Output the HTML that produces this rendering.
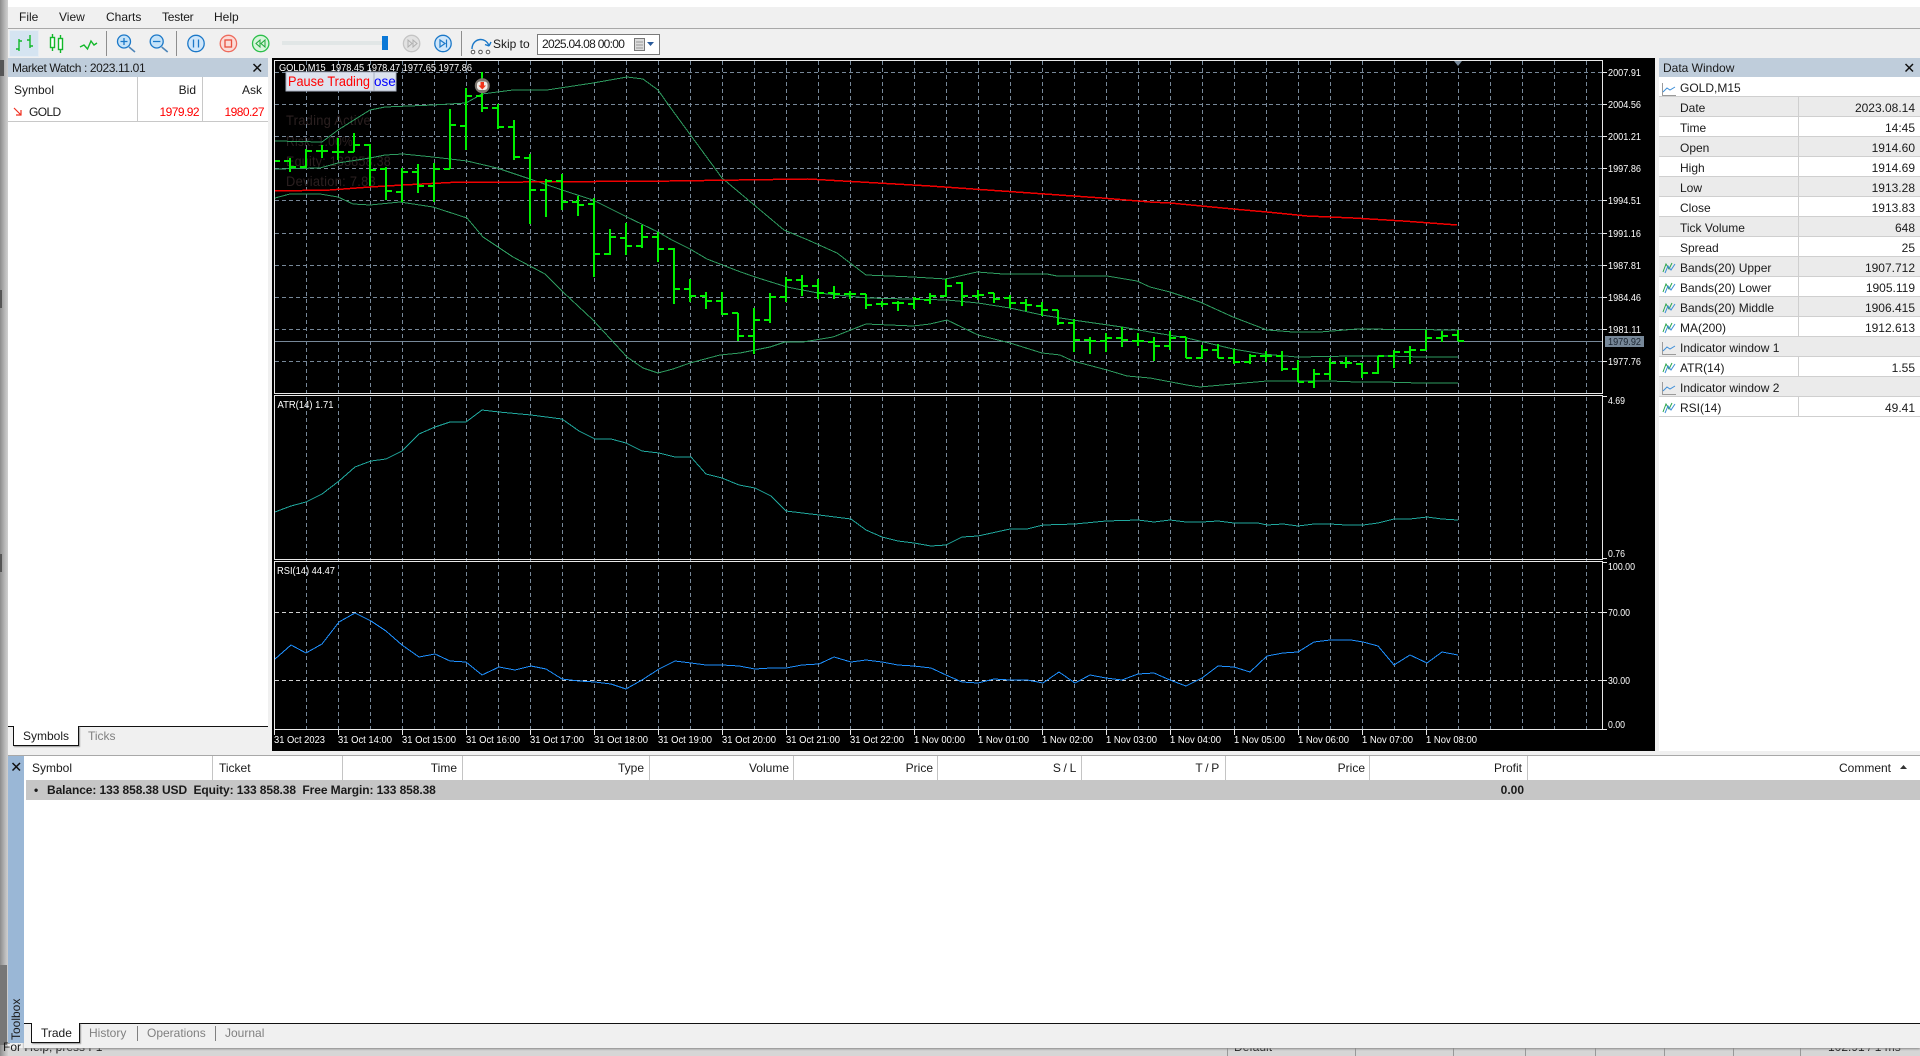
<!DOCTYPE html>
<html><head><meta charset="utf-8"><title>Strategy Tester</title>
<style>
html,body{margin:0;padding:0;background:#f0f0f0;width:1920px;height:1056px;overflow:hidden}
body{position:relative;font-family:"Liberation Sans",sans-serif;font-size:12px;color:#1a1a1a}
.b{position:absolute}
.t{position:absolute;white-space:nowrap;line-height:14px;height:14px}
.g{color:#808080}.red{color:#f00}.bd{font-weight:bold}
svg text{font-family:"Liberation Sans",sans-serif}
.w text{fill:#fff;font-size:10px}
</style></head><body>
<!-- left strip -->
<div class="b" style="left:0;top:0;width:8px;height:1056px;background:linear-gradient(90deg,#8c8c8c,#b8b8b8 60%,#d0d0d0)"></div>
<div class="b" style="left:0;top:60px;width:4px;height:16px;background:#555"></div>
<div class="b" style="left:0;top:290px;width:2px;height:18px;background:#555"></div>
<div class="b" style="left:0;top:554px;width:2px;height:18px;background:#555"></div>
<div class="b" style="left:0;top:965px;width:7px;height:80px;background:#777"></div>
<!-- top white -->
<div class="b" style="left:8px;top:0;width:1912px;height:7px;background:#fff"></div>
<div class="b" style="left:8px;top:28px;width:1912px;height:1px;background:#a8a8a8"></div>
<div class="t" style="left:19px;top:10px">File</div>
<div class="t" style="left:59px;top:10px">View</div>
<div class="t" style="left:106px;top:10px">Charts</div>
<div class="t" style="left:162px;top:10px;letter-spacing:-.2px">Tester</div>
<div class="t" style="left:214px;top:10px">Help</div>
<!-- toolbar -->
<div class="b" style="left:9px;top:30px;width:28px;height:25px;background:#d5e4f1;border:1px solid #e6edf4"></div>
<svg class="b" style="left:0;top:0" width="700" height="60" viewBox="0 0 700 60">
<g fill="none" stroke="#12b82a" stroke-width="1.4">
<path d="M19 39V51M16 49H19M19 41H22M30 35V48M27 40H30M30 46H33"/>
<path d="M52.5 34V51M60.5 35V53" />
<rect x="50.5" y="37.5" width="4" height="10" fill="#fff"/><rect x="58.5" y="38.5" width="4" height="11" fill="#fff"/>
<path d="M80 47L84 45L87.5 49L91 41L94 45L97 43"/>
</g>
<path d="M106.500 31V56M176.500 31V56M461.500 31V56" stroke="#8e8e8e"/>
<g fill="#c6e3f8" stroke="#1b78c8" stroke-width="1.3">
<circle cx="124" cy="41.500" r="6.500"/><circle cx="156.700" cy="41.500" r="6.500"/>
<circle cx="196" cy="43.500" r="8.200" fill="#cfe6fa"/><circle cx="443" cy="43.500" r="8.200" fill="#cfe6fa"/>
</g>
<path d="M129 47L135 52M161.700 47L167.700 52" stroke="#4f86b8" stroke-width="1.600"/>
<path d="M120.500 41.500H127.500M124 38V45M153 41.500H160.400M193.500 39.500V47.500M198.500 39.500V47.500" stroke="#1b78c8" stroke-width="1.300" fill="none"/>
<circle cx="228.400" cy="43.500" r="8.200" fill="#fbdcd8" stroke="#ee6b5d" stroke-width="1.300"/>
<rect x="225" y="40" width="6.500" height="7" fill="none" stroke="#e8503f" stroke-width="1.300"/>
<circle cx="260.700" cy="43.500" r="8.200" fill="#d8f5dc" stroke="#2cbf4a" stroke-width="1.300"/>
<path d="M260 40L256 43.500L260 47ZM265 40L261 43.500L265 47Z" fill="none" stroke="#1ea83a"/>
<rect x="282" y="41" width="104" height="4" fill="#e1e6e6"/>
<rect x="382" y="36" width="6" height="14" fill="#0a78d7"/>
<circle cx="411.600" cy="43.500" r="8.200" fill="#e2e2e2" stroke="#c4c4c4" stroke-width="1.300"/>
<path d="M408 40L412 43.500L408 47ZM413 40L417 43.500L413 47Z" fill="none" stroke="#b0b0b0"/>
<path d="M440 40L445 43.500L440 47ZM446.500 39.500V47.500" fill="none" stroke="#1b78c8" stroke-width="1.200"/>
<path d="M472 49C472 38 486 36 489 46M489 46L491 42M489 46L485 44.500" fill="none" stroke="#1b78c8" stroke-width="1.400"/>
<circle cx="473" cy="52" r="1.800" fill="#fff" stroke="#555"/><circle cx="480.500" cy="52" r="1.800" fill="#fff" stroke="#555"/><circle cx="488" cy="52" r="1.800" fill="#fff" stroke="#555"/>
<rect x="537.500" y="34.500" width="122" height="20" fill="#fff" stroke="#7a7a7a"/>
<rect x="634.500" y="38.500" width="10" height="12" fill="#dcdcdc" stroke="#777"/>
<path d="M636 42H643M636 45H643M636 48H643" stroke="#999"/>
<path d="M647 42H654L650.500 46Z" fill="#2a5a9a"/>
</svg>
<div class="t" style="left:493px;top:37px">Skip to</div>
<div class="t" style="left:542px;top:37px;letter-spacing:-.7px">2025.04.08 00:00</div>

<!-- market watch -->
<div class="b" style="left:8px;top:58px;width:260px;height:668px;background:#fff"></div>
<div class="b" style="left:8px;top:58px;width:260px;height:19px;background:#bfcddb"></div>
<div class="t" style="left:12px;top:61px;letter-spacing:-.38px">Market Watch : 2023.11.01</div>
<svg class="b" style="left:252px;top:63px" width="11" height="10"><path d="M1.500 1L9 8.500M9 1L1.500 8.500" stroke="#111" stroke-width="1.500"/></svg>
<div class="b" style="left:137px;top:77px;width:1px;height:44px;background:#c8c8c8"></div>
<div class="b" style="left:202px;top:77px;width:1px;height:44px;background:#c8c8c8"></div>
<div class="b" style="left:8px;top:121px;width:260px;height:1px;background:#c8c8c8"></div>
<div class="t" style="left:14px;top:83px">Symbol</div>
<div class="t" style="right:1724px;top:83px">Bid</div>
<div class="t" style="right:1658px;top:83px">Ask</div>
<svg class="b" style="left:13px;top:107px" width="10" height="10"><path d="M1 1L8 8M8 3V8H3" fill="none" stroke="#f03020" stroke-width="1.200"/></svg>
<div class="t" style="left:29px;top:105px;letter-spacing:-.6px">GOLD</div>
<div class="t red" style="right:1721px;top:105px;letter-spacing:-.55px">1979.92</div>
<div class="t red" style="right:1656px;top:105px;letter-spacing:-.55px">1980.27</div>
<!-- market tabs -->
<div class="b" style="left:8px;top:726px;width:260px;height:1px;background:#111"></div>
<div class="b" style="left:13px;top:726px;width:64px;height:19px;background:#fff;border:1px solid #111;border-top:none;box-shadow:1px 1px 1px #999"></div>
<div class="t" style="left:23px;top:729px">Symbols</div>
<div class="t g" style="left:88px;top:729px">Ticks</div>
<div class="b" style="left:8px;top:755px;width:1912px;height:1px;background:#a8a8a8"></div>

<!-- chart -->
<svg class="b" style="left:0;top:0" width="1920" height="1056" viewBox="0 0 1920 1056">
<rect x="272" y="58" width="1383" height="693" fill="#000"/>
<g font-size="14" fill="#2b2020" style="letter-spacing:.3px">
<text x="286" y="125" textLength="85" lengthAdjust="spacingAndGlyphs">Trading Active</text>
<text x="286" y="146" textLength="67" lengthAdjust="spacingAndGlyphs">Risk: 1.00%</text>
<text x="286" y="166" textLength="105" lengthAdjust="spacingAndGlyphs">Equity: 133858.38</text>
<text x="286" y="186" textLength="90" lengthAdjust="spacingAndGlyphs">Deviation: 7.83</text>
</g>
<path stroke="#778899" stroke-dasharray="4 3" fill="none" shape-rendering="crispEdges" d="M306.500 61V730M338.500 61V730M370.500 61V730M402.500 61V730M434.500 61V730M466.500 61V730M498.500 61V730M530.500 61V730M562.500 61V730M594.500 61V730M626.500 61V730M658.500 61V730M690.500 61V730M722.500 61V730M754.500 61V730M786.500 61V730M818.500 61V730M850.500 61V730M882.500 61V730M914.500 61V730M946.500 61V730M978.500 61V730M1010.500 61V730M1042.500 61V730M1074.500 61V730M1106.500 61V730M1138.500 61V730M1170.500 61V730M1202.500 61V730M1234.500 61V730M1266.500 61V730M1298.500 61V730M1330.500 61V730M1362.500 61V730M1394.500 61V730M1426.500 61V730M1458.500 61V730M1490.500 61V730M1522.500 61V730M1554.500 61V730M1586.500 61V730"/>
<path stroke="#778899" stroke-dasharray="4 3" fill="none" shape-rendering="crispEdges" d="M275 72.500H1602M275 104.500H1602M275 136.500H1602M275 168.500H1602M275 200.500H1602M275 233.500H1602M275 265.500H1602M275 297.500H1602M275 329.500H1602M275 361.500H1602"/>
<path stroke="#778899" fill="none" shape-rendering="crispEdges" d="M275 341.500H1602"/>
<path stroke="#d0d0d0" stroke-dasharray="4 3" fill="none" shape-rendering="crispEdges" d="M275 612.500H1602M275 680.500H1602"/>
<!-- bands -->
<g fill="none" stroke="#2e9b5f" stroke-width="1" shape-rendering="crispEdges">
<path d="M275 141L322 142L338 130L370 110L385 107L433 105L466 103L482 94L513 90L547 90L593 83L627 77L643 79L658 90L670 107L722 178L784 230L808 240L837 253L866 275L913 277L946 279L977 272L1003 274L1047 274L1057 276L1107 276L1137 281L1150 287L1170 292L1200 302L1233 317L1267 330L1293 332L1320 332L1357 329L1458 330"/>
<path d="M275 169L320 168L338 163L370 158L385 155L403 154L433 157L467 161L497 168L530 179L562 190L593 200L627 217L658 232L672 240L690 249L707 259L738 271L755 277L787 287L818 293L867 298L947 300L978 303L1010 308L1042 315L1073 320L1122 327L1150 332L1187 338L1233 349L1263 354L1297 357L1353 356L1390 356L1420 357L1458 357"/>
<path d="M275 198L290 194L320 194L338 197L353 204L370 205L400 202L433 207L467 218L483 237L513 257L545 274L563 292L593 320L627 357L643 368L658 373L673 369L690 363L720 355L740 353L770 347L785 342L803 342L833 337L866 324L913 326L930 324L947 320L978 335L1010 343L1042 353L1060 355L1073 361L1107 370L1127 376L1150 378L1187 385L1200 387L1233 384L1267 381L1330 381L1357 382L1383 382L1420 383L1458 383"/>
</g>
<path fill="none" stroke="#f00000" stroke-width="1.500" shape-rendering="crispEdges" d="M275 191L330 190L370 187L403 185L460 182L523 182L670 181L808 179L930 186L1102 198L1150 202L1170 203L1233 209L1267 212L1307 216L1353 218L1403 221L1457 225"/>
<!-- bars -->
<path fill="none" stroke="#00f000" stroke-width="2" shape-rendering="crispEdges" d="M275 161H280
M290 158V172M284 161H290M290 167H296
M306 149V168M300 167H306M306 151H312
M322 145V158M316 151H322M322 151H328
M338 138V160M332 152H338M338 152H344
M354 133V152M348 152H354M354 145H360
M370 144V186M364 145H370M370 170H376
M386 167V200M380 169H386M386 191H392
M402 168V202M396 192H402M402 172H408
M418 164V193M412 172H418M418 186H424
M434 163V202M428 186H434M434 169H440
M450 109V169M444 169H450M450 125H456
M466 88V150M460 126H466M466 96H472
M482 72V112M476 96H482M482 108H488
M498 104V129M492 108H498M498 127H504
M514 120V160M508 127H514M514 157H520
M530 154V224M524 158H530M530 190H536
M546 179V217M540 190H546M546 181H552
M562 174V210M556 181H562M562 202H568
M578 196V216M572 202H578M578 205H584
M594 198V277M588 204H594M594 254H600
M610 229V255M604 254H610M610 237H616
M626 223V255M620 238H626M626 246H632
M642 225V248M636 246H642M642 237H648
M658 232V262M652 237H658M658 249H664
M674 248V304M668 249H674M674 289H680
M690 279V302M684 289H690M690 296H696
M706 292V309M700 296H706M706 301H712
M722 292V315M716 301H722M722 314H728
M738 313V341M732 313H738M738 336H744
M754 308V354M748 336H754M754 320H760
M770 293V323M764 320H770M770 297H776
M786 277V302M780 297H786M786 280H792
M802 275V296M796 280H802M802 286H808
M818 279V299M812 286H818M818 293H824
M834 286V299M828 293H834M834 294H840
M850 291V299M844 294H850M850 294H856
M866 294V309M860 294H866M866 305H872
M882 301V307M876 304H882M882 304H888
M898 301V311M892 303H898M898 303H904
M914 297V309M908 304H914M914 299H920
M930 293V304M924 300H930M930 296H936
M946 279V297M940 296H946M946 286H952
M962 282V306M956 283H962M962 296H968
M978 290V300M972 296H978M978 295H984
M994 293V303M988 293H994M994 299H1000
M1010 295V308M1004 298H1010M1010 303H1016
M1026 299V311M1020 303H1026M1026 305H1032
M1042 302V316M1036 306H1042M1042 310H1048
M1058 310V325M1052 310H1058M1058 323H1064
M1074 319V352M1068 323H1074M1074 340H1080
M1090 337V354M1084 340H1090M1090 341H1096
M1106 333V352M1100 341H1106M1106 338H1112
M1122 327V347M1116 338H1122M1122 340H1128
M1138 333V346M1132 341H1138M1138 341H1144
M1154 337V361M1148 342H1154M1154 346H1160
M1170 331V350M1164 346H1170M1170 338H1176
M1186 337V358M1180 337H1186M1186 358H1192
M1202 345V358M1196 358H1202M1202 350H1208
M1218 344V358M1212 350H1218M1218 358H1224
M1234 349V364M1228 358H1234M1234 362H1240
M1250 354V364M1244 362H1250M1250 356H1256
M1266 351V362M1260 356H1266M1266 356H1272
M1282 351V371M1276 356H1282M1282 369H1288
M1298 360V382M1292 369H1298M1298 382H1304
M1314 369V388M1308 382H1314M1314 374H1320
M1330 358V380M1324 374H1330M1330 363H1336
M1346 357V368M1340 363H1346M1346 363H1352
M1362 363V378M1356 364H1362M1362 373H1368
M1378 356V374M1372 373H1378M1378 356H1384
M1394 350V368M1388 356H1394M1394 352H1400
M1410 346V364M1404 352H1410M1410 350H1416
M1426 330V350M1420 350H1426M1426 338H1432
M1442 331V342M1436 338H1442M1442 336H1448
M1458 330V341M1452 335H1458M1458 341H1464"/>
<!-- ATR -->
<path fill="none" stroke="#20a89e" stroke-width="1" shape-rendering="crispEdges" d="M275 512L291 506L306 502L322 494L339 481L355 467L371 461L386 459L402 451L419 434L435 427L450 422L466 422L482 410L499 412L531 415L562 419L579 431L595 439L611 439L626 443L642 451L659 453L675 457L691 457L706 474L722 478L739 485L755 488L771 496L786 511L819 515L851 519L866 530L882 537L898 541L914 543L931 546L946 545L962 537L978 536L1010 529L1027 529L1043 525L1075 524L1106 521L1138 520L1154 522L1170 520L1186 522L1202 522L1218 521L1234 523L1258 523L1267 525L1283 524L1298 526L1314 524L1330 524L1346 525L1363 525L1378 523L1394 519L1410 519L1427 517L1442 519L1458 520"/>
<!-- RSI -->
<path fill="none" stroke="#1e90ff" stroke-width="1" shape-rendering="crispEdges" d="M275 659L291 645L306 653L322 644L339 622L355 613L371 621L386 631L402 645L419 657L435 654L450 661L466 662L482 675L499 667L515 670L531 666L546 669L562 679L579 681L595 682L611 684L626 689L642 680L659 669L675 661L691 663L706 665L722 665L739 666L755 669L771 668L786 668L802 665L819 664L834 657L851 662L866 660L882 662L898 665L914 666L931 668L946 675L962 682L978 683L994 679L1010 680L1027 680L1043 683L1059 672L1075 683L1090 675L1106 678L1122 680L1138 674L1154 673L1170 680L1186 686L1202 678L1218 666L1234 667L1250 672L1267 656L1283 653L1298 652L1314 642L1330 640L1351 640L1363 642L1378 646L1394 665L1410 655L1427 663L1442 652L1458 655"/>
<!-- frames -->
<g fill="none" stroke="#e8e8e8" shape-rendering="crispEdges">
<rect x="274.500" y="60.500" width="1328" height="333"/>
<rect x="274.500" y="395.500" width="1328" height="164"/>
<rect x="274.500" y="561.500" width="1328" height="168"/>
<path d="M1603 72.500H1607M1603 104.500H1607M1603 136.500H1607M1603 168.500H1607M1603 200.500H1607M1603 233.500H1607M1603 265.500H1607M1603 297.500H1607M1603 329.500H1607M1603 361.500H1607M1603 396.500H1607M1603 558.500H1607M1603 562.500H1607M1603 612.500H1607M1603 680.500H1607M1603 729.500H1607"/>
<path d="M274.500 730V735M338.500 730V735M402.500 730V735M466.500 730V735M530.500 730V735M594.500 730V735M658.500 730V735M722.500 730V735M786.500 730V735M850.500 730V735M914.500 730V735M978.500 730V735M1042.500 730V735M1106.500 730V735M1170.500 730V735M1234.500 730V735M1298.500 730V735M1362.500 730V735M1426.500 730V735"/>
</g>
<path d="M1454 61H1462L1458 66Z" fill="#778899"/>
<rect x="1605" y="336" width="39" height="11" fill="#778899"/>
<text x="1608" y="345" font-size="10" fill="#1a2430" textLength="33" lengthAdjust="spacingAndGlyphs">1979.92</text>
<g class="w">
<text x="279" y="71" textLength="193" lengthAdjust="spacingAndGlyphs" style="white-space:pre">GOLD,M15  1978.45 1978.47 1977.65 1977.86</text>
<text x="277.500" y="408" textLength="56" lengthAdjust="spacingAndGlyphs">ATR(14) 1.71</text>
<text x="277" y="574" textLength="58" lengthAdjust="spacingAndGlyphs">RSI(14) 44.47</text>
<text x="1608" y="76" textLength="33" lengthAdjust="spacingAndGlyphs">2007.91</text>
<text x="1608" y="108" textLength="33" lengthAdjust="spacingAndGlyphs">2004.56</text>
<text x="1608" y="140" textLength="33" lengthAdjust="spacingAndGlyphs">2001.21</text>
<text x="1608" y="172" textLength="33" lengthAdjust="spacingAndGlyphs">1997.86</text>
<text x="1608" y="204" textLength="33" lengthAdjust="spacingAndGlyphs">1994.51</text>
<text x="1608" y="237" textLength="33" lengthAdjust="spacingAndGlyphs">1991.16</text>
<text x="1608" y="269" textLength="33" lengthAdjust="spacingAndGlyphs">1987.81</text>
<text x="1608" y="301" textLength="33" lengthAdjust="spacingAndGlyphs">1984.46</text>
<text x="1608" y="333" textLength="33" lengthAdjust="spacingAndGlyphs">1981.11</text>
<text x="1608" y="365" textLength="33" lengthAdjust="spacingAndGlyphs">1977.76</text>
<text x="1608" y="404" textLength="17" lengthAdjust="spacingAndGlyphs">4.69</text>
<text x="1608" y="557" textLength="17" lengthAdjust="spacingAndGlyphs">0.76</text>
<text x="1608" y="570" textLength="27" lengthAdjust="spacingAndGlyphs">100.00</text>
<text x="1608" y="616" textLength="22" lengthAdjust="spacingAndGlyphs">70.00</text>
<text x="1608" y="684" textLength="22" lengthAdjust="spacingAndGlyphs">30.00</text>
<text x="1608" y="728" textLength="17" lengthAdjust="spacingAndGlyphs">0.00</text>
<text x="274" y="743" textLength="51" lengthAdjust="spacingAndGlyphs">31 Oct 2023</text>
<text x="338" y="743" textLength="54" lengthAdjust="spacingAndGlyphs">31 Oct 14:00</text>
<text x="402" y="743" textLength="54" lengthAdjust="spacingAndGlyphs">31 Oct 15:00</text>
<text x="466" y="743" textLength="54" lengthAdjust="spacingAndGlyphs">31 Oct 16:00</text>
<text x="530" y="743" textLength="54" lengthAdjust="spacingAndGlyphs">31 Oct 17:00</text>
<text x="594" y="743" textLength="54" lengthAdjust="spacingAndGlyphs">31 Oct 18:00</text>
<text x="658" y="743" textLength="54" lengthAdjust="spacingAndGlyphs">31 Oct 19:00</text>
<text x="722" y="743" textLength="54" lengthAdjust="spacingAndGlyphs">31 Oct 20:00</text>
<text x="786" y="743" textLength="54" lengthAdjust="spacingAndGlyphs">31 Oct 21:00</text>
<text x="850" y="743" textLength="54" lengthAdjust="spacingAndGlyphs">31 Oct 22:00</text>
<text x="914" y="743" textLength="51" lengthAdjust="spacingAndGlyphs">1 Nov 00:00</text>
<text x="978" y="743" textLength="51" lengthAdjust="spacingAndGlyphs">1 Nov 01:00</text>
<text x="1042" y="743" textLength="51" lengthAdjust="spacingAndGlyphs">1 Nov 02:00</text>
<text x="1106" y="743" textLength="51" lengthAdjust="spacingAndGlyphs">1 Nov 03:00</text>
<text x="1170" y="743" textLength="51" lengthAdjust="spacingAndGlyphs">1 Nov 04:00</text>
<text x="1234" y="743" textLength="51" lengthAdjust="spacingAndGlyphs">1 Nov 05:00</text>
<text x="1298" y="743" textLength="51" lengthAdjust="spacingAndGlyphs">1 Nov 06:00</text>
<text x="1362" y="743" textLength="51" lengthAdjust="spacingAndGlyphs">1 Nov 07:00</text>
<text x="1426" y="743" textLength="51" lengthAdjust="spacingAndGlyphs">1 Nov 08:00</text>
</g>
<!-- marker -->
<circle cx="482.300" cy="85.700" r="7.500" fill="#7f7870"/>
<rect x="477" y="81.500" width="10.500" height="8.500" rx="3" fill="#f2ece8"/>
<path d="M480.500 82H484V85.500H486L482.300 89.500L478.500 85.500H480.500Z" fill="#f0341a"/>
<!-- buttons -->
<rect x="286" y="72" width="110" height="19" fill="#dbe2ee" stroke="#aab2c2"/>
<text x="374" y="86" font-size="13.500" fill="#0000ff">ose</text>
<rect x="286" y="72" width="88" height="19" fill="#dde3ee" stroke="#aab2c2"/>
<text x="288" y="86" font-size="13.500" fill="#f00" textLength="82" lengthAdjust="spacingAndGlyphs">Pause Trading</text>
</svg>

<!-- data window -->
<div class="b" style="left:1659px;top:58px;width:261px;height:693px;background:#fff"></div>
<div class="b" style="left:1659px;top:58px;width:261px;height:19px;background:#bfcddb"></div>
<div class="t" style="left:1663px;top:61px">Data Window</div>
<svg class="b" style="left:1904px;top:63px" width="11" height="10"><path d="M1.500 1L9 8.500M9 1L1.500 8.500" stroke="#111" stroke-width="1.500"/></svg>
<div class="b" style="left:1659px;top:97px;width:261px;height:320px;background:repeating-linear-gradient(180deg,#ebebeb 0,#ebebeb 19px,#cfcfcf 19px,#cfcfcf 20px,#fff 20px,#fff 39px,#cfcfcf 39px,#cfcfcf 40px)"></div>
<div class="b" style="left:1659px;top:96px;width:261px;height:1px;background:#cfcfcf"></div>
<div class="b" style="left:1798px;top:97px;width:1px;height:240px;background:#cfcfcf"></div>
<div class="b" style="left:1798px;top:357px;width:1px;height:20px;background:#cfcfcf"></div>
<div class="b" style="left:1798px;top:397px;width:1px;height:20px;background:#cfcfcf"></div>
<div class="t" style="left:1680px;top:81px">GOLD,M15</div>
<div class="t" style="left:1680px;top:101px">Date</div><div class="t" style="right:5px;top:101px">2023.08.14</div>
<div class="t" style="left:1680px;top:121px">Time</div><div class="t" style="right:5px;top:121px">14:45</div>
<div class="t" style="left:1680px;top:141px">Open</div><div class="t" style="right:5px;top:141px">1914.60</div>
<div class="t" style="left:1680px;top:161px">High</div><div class="t" style="right:5px;top:161px">1914.69</div>
<div class="t" style="left:1680px;top:181px">Low</div><div class="t" style="right:5px;top:181px">1913.28</div>
<div class="t" style="left:1680px;top:201px">Close</div><div class="t" style="right:5px;top:201px">1913.83</div>
<div class="t" style="left:1680px;top:221px">Tick Volume</div><div class="t" style="right:5px;top:221px">648</div>
<div class="t" style="left:1680px;top:241px">Spread</div><div class="t" style="right:5px;top:241px">25</div>
<div class="t" style="left:1680px;top:261px">Bands(20) Upper</div><div class="t" style="right:5px;top:261px">1907.712</div>
<div class="t" style="left:1680px;top:281px">Bands(20) Lower</div><div class="t" style="right:5px;top:281px">1905.119</div>
<div class="t" style="left:1680px;top:301px">Bands(20) Middle</div><div class="t" style="right:5px;top:301px">1906.415</div>
<div class="t" style="left:1680px;top:321px">MA(200)</div><div class="t" style="right:5px;top:321px">1912.613</div>
<div class="t" style="left:1680px;top:341px">Indicator window 1</div>
<div class="t" style="left:1680px;top:361px">ATR(14)</div><div class="t" style="right:5px;top:361px">1.55</div>
<div class="t" style="left:1680px;top:381px">Indicator window 2</div>
<div class="t" style="left:1680px;top:401px">RSI(14)</div><div class="t" style="right:5px;top:401px">49.41</div>
<svg class="b" style="left:1659px;top:77px" width="20" height="340" viewBox="0 0 20 340" fill="none">
<g transform="translate(0,2)"><path d="M3.500 4V16.500H17" stroke="#9a9a9a"/><path d="M4 13L8 9L11 11L16 8" stroke="#3c8ed8"/></g>
<g transform="translate(0,261)"><path d="M3.500 4V16.500H17" stroke="#9a9a9a"/><path d="M4 13L8 9L11 11L16 8" stroke="#3c8ed8"/></g>
<g transform="translate(0,301)"><path d="M3.500 4V16.500H17" stroke="#9a9a9a"/><path d="M4 13L8 9L11 11L16 8" stroke="#3c8ed8"/></g>
<g stroke-width="1">
<g transform="translate(0,180)"><path d="M4 15L7 7L10 12L13 6" stroke="#2aa44a"/><path d="M6 16L9 9L12 13L16 7" stroke="#3c8ed8"/></g>
<g transform="translate(0,200)"><path d="M4 15L7 7L10 12L13 6" stroke="#2aa44a"/><path d="M6 16L9 9L12 13L16 7" stroke="#3c8ed8"/></g>
<g transform="translate(0,220)"><path d="M4 15L7 7L10 12L13 6" stroke="#2aa44a"/><path d="M6 16L9 9L12 13L16 7" stroke="#3c8ed8"/></g>
<g transform="translate(0,240)"><path d="M4 15L7 7L10 12L13 6" stroke="#2aa44a"/><path d="M6 16L9 9L12 13L16 7" stroke="#3c8ed8"/></g>
<g transform="translate(0,280)"><path d="M4 15L7 7L10 12L13 6" stroke="#2aa44a"/><path d="M6 16L9 9L12 13L16 7" stroke="#3c8ed8"/></g>
<g transform="translate(0,320)"><path d="M4 15L7 7L10 12L13 6" stroke="#2aa44a"/><path d="M6 16L9 9L12 13L16 7" stroke="#3c8ed8"/></g>
</g>
</svg>

<!-- status (mostly hidden) -->
<div class="b" style="left:8px;top:1048px;width:1912px;height:8px;background:#d6d6d6"></div>
<div class="t" style="left:3px;top:1040px">For Help, press F1</div>
<div class="t" style="left:1234px;top:1040px">Default</div>
<div class="t" style="left:1828px;top:1040px">102.91 / 1 ms</div>
<div class="b" style="left:1227px;top:1048px;width:1px;height:8px;background:#999"></div>
<div class="b" style="left:1355px;top:1048px;width:1px;height:8px;background:#999"></div>
<div class="b" style="left:1453px;top:1048px;width:1px;height:8px;background:#999"></div>
<div class="b" style="left:1525px;top:1048px;width:1px;height:8px;background:#999"></div>
<div class="b" style="left:1595px;top:1048px;width:1px;height:8px;background:#999"></div>
<div class="b" style="left:1664px;top:1048px;width:1px;height:8px;background:#999"></div>
<div class="b" style="left:1733px;top:1048px;width:1px;height:8px;background:#999"></div>
<div class="b" style="left:1800px;top:1048px;width:1px;height:8px;background:#999"></div>

<!-- toolbox -->
<div class="b" style="left:24px;top:1023px;width:1896px;height:25px;background:#f0f0f0;box-shadow:0 1px 2px #888"></div>
<div class="b" style="left:8px;top:756px;width:16px;height:287px;background:#9ab7d6"></div>
<div class="b" style="left:24px;top:756px;width:1896px;height:267px;background:#fff"></div>
<div class="b" style="left:26px;top:780px;width:1894px;height:20px;background:#c6c6c6"></div>
<svg class="b" style="left:11px;top:762px" width="11" height="10"><path d="M1.500 1L9 8.500M9 1L1.500 8.500" stroke="#111" stroke-width="1.500"/></svg>
<div class="b" style="left:212px;top:756px;width:1px;height:24px;background:#c4c4c4"></div>
<div class="b" style="left:342px;top:756px;width:1px;height:24px;background:#c4c4c4"></div>
<div class="b" style="left:462px;top:756px;width:1px;height:24px;background:#c4c4c4"></div>
<div class="b" style="left:649px;top:756px;width:1px;height:24px;background:#c4c4c4"></div>
<div class="b" style="left:793px;top:756px;width:1px;height:24px;background:#c4c4c4"></div>
<div class="b" style="left:937px;top:756px;width:1px;height:24px;background:#c4c4c4"></div>
<div class="b" style="left:1081px;top:756px;width:1px;height:24px;background:#c4c4c4"></div>
<div class="b" style="left:1225px;top:756px;width:1px;height:24px;background:#c4c4c4"></div>
<div class="b" style="left:1369px;top:756px;width:1px;height:24px;background:#c4c4c4"></div>
<div class="b" style="left:1527px;top:756px;width:1px;height:24px;background:#c4c4c4"></div>
<div class="t" style="left:32px;top:761px">Symbol</div>
<div class="t" style="left:219px;top:761px">Ticket</div>
<div class="t" style="right:1463px;top:761px">Time</div>
<div class="t" style="right:1276px;top:761px">Type</div>
<div class="t" style="right:1131px;top:761px">Volume</div>
<div class="t" style="right:987px;top:761px">Price</div>
<div class="t" style="right:844px;top:761px;letter-spacing:-.3px">S / L</div>
<div class="t" style="right:701px;top:761px;letter-spacing:-.3px">T / P</div>
<div class="t" style="right:555px;top:761px">Price</div>
<div class="t" style="right:398px;top:761px">Profit</div>
<div class="t" style="right:29px;top:761px">Comment</div>
<svg class="b" style="left:1900px;top:764px" width="8" height="6"><path d="M0 5H7L3.500 1Z" fill="#333"/></svg>
<div class="t bd" style="left:34px;top:783px">•</div>
<div class="t bd" style="left:47px;top:783px;letter-spacing:-.09px">Balance: 133 858.38 USD&nbsp; Equity: 133 858.38&nbsp; Free Margin: 133 858.38</div>
<div class="t bd" style="right:396px;top:783px">0.00</div>
<div class="t" style="left:1px;top:1018px;width:30px;text-align:center;transform:rotate(-90deg);transform-origin:15px 7px">Toolbox</div>
<!-- bottom tabs -->
<div class="b" style="left:24px;top:1023px;width:1896px;height:1px;background:#111"></div>
<div class="b" style="left:31px;top:1023px;width:47px;height:19px;background:#fff;border:1px solid #111;border-top:none;box-shadow:1px 1px 1px #999"></div>
<div class="t" style="left:41px;top:1026px">Trade</div>
<div class="t g" style="left:89px;top:1026px">History</div>
<div class="b" style="left:137px;top:1026px;width:1px;height:15px;background:#808080"></div>
<div class="t g" style="left:147px;top:1026px">Operations</div>
<div class="b" style="left:215px;top:1026px;width:1px;height:15px;background:#808080"></div>
<div class="t g" style="left:225px;top:1026px">Journal</div>
</body></html>
